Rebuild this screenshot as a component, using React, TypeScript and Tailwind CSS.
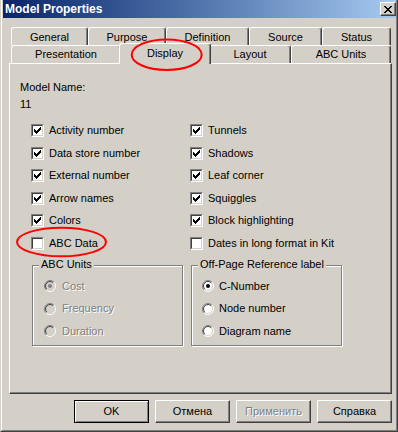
import React from "react";

const Check = ({ checked }: { checked: boolean }) => (
  <span className="block w-[13px] h-[13px] shrink-0 border border-t-[#808080] border-l-[#808080] border-r-white border-b-white">
    <span className="block w-[11px] h-[11px] border border-t-[#404040] border-l-[#404040] border-r-[#d4d0c8] border-b-[#d4d0c8] bg-white">
      {checked && (
        <svg width="9" height="9" viewBox="0 0 9 9" shapeRendering="crispEdges" className="block">
          {[2, 3, 4, 3, 2, 1, 0].map((r, c) => (
            <rect key={c} x={1 + c} y={1 + r} width="1" height="3" fill="#000" />
          ))}
        </svg>
      )}
    </span>
  </span>
);

const arcA = (r: number) => {
  const d = r / Math.SQRT2;
  return `M ${6 - d} ${6 + d} A ${r} ${r} 0 0 1 ${6 + d} ${6 - d}`;
};
const arcB = (r: number) => {
  const d = r / Math.SQRT2;
  return `M ${6 + d} ${6 - d} A ${r} ${r} 0 0 1 ${6 - d} ${6 + d}`;
};

const Radio = ({ checked, disabled }: { checked: boolean; disabled: boolean }) => (
  <svg width="12" height="12" viewBox="0 0 12 12" className="block shrink-0">
    <circle cx="6" cy="6" r="5" fill={disabled ? "#d4d0c8" : "#fff"} />
    <path d={arcA(5.5)} stroke="#808080" strokeWidth="1" fill="none" />
    <path d={arcB(5.5)} stroke="#fff" strokeWidth="1" fill="none" />
    <path d={arcA(4.5)} stroke="#404040" strokeWidth="1" fill="none" />
    <path d={arcB(4.5)} stroke="#d4d0c8" strokeWidth="1" fill="none" />
    {checked && <circle cx="6" cy="6" r="2" fill={disabled ? "#808080" : "#000"} />}
  </svg>
);

const tabBase =
  "h-[18px] flex items-center justify-center border-t border-l border-r border-t-white border-l-white border-r-[#404040] shadow-[inset_-1px_0_#808080] rounded-t-[3px] bg-[#d4d0c8] whitespace-nowrap";

const disabledText = "text-[#808080] [text-shadow:1px_1px_0_#ffffff]";

const leftChecks: [string, boolean][] = [
  ["Activity number", true],
  ["Data store number", true],
  ["External number", true],
  ["Arrow names", true],
  ["Colors", true],
  ["ABC Data", false],
];
const rightChecks: [string, boolean][] = [
  ["Tunnels", true],
  ["Shadows", true],
  ["Leaf corner", true],
  ["Squiggles", true],
  ["Block highlighting", true],
  ["Dates in long format in Kit", false],
];
const rowH = ["h-[23px]", "h-[22px]", "h-[23px]", "h-[22px]", "h-[23px]", "h-[22px]"];

const xPix = [
  [0, 1, 6, 7],
  [1, 2, 5, 6],
  [2, 3, 4, 5],
  [3, 4],
  [2, 3, 4, 5],
  [1, 2, 5, 6],
  [0, 1, 6, 7],
];

const btn =
  "w-[75px] h-[23px] flex items-center justify-center bg-[#d4d0c8] border border-t-white border-l-white border-r-[#404040] border-b-[#404040] shadow-[inset_-1px_-1px_#808080]";

export default function App() {
  return (
    <div className="relative w-[398px] h-[432px] overflow-hidden bg-[#d4d0c8] font-['Liberation_Sans',Arial,sans-serif] text-[11px] leading-[13px] text-black">
      <div className="h-full border-l border-r border-b border-l-[#d4d0c8] border-r-[#404040] border-b-[#404040]">
        <div className="h-full flex flex-col border-l border-r border-b border-l-white border-r-[#808080] border-b-[#808080] pl-[1px]">
          {/* Title bar */}
          <div className="h-[18px] shrink-0 flex items-center justify-between bg-linear-to-r from-[#0a246a] to-[#a6caf0] pl-[2px]">
            <span className="text-white font-bold text-[12px] leading-[14px]">Model Properties</span>
            <div className="w-[16px] h-[14px] flex items-center justify-center bg-[#d4d0c8] border border-t-white border-l-white border-r-[#404040] border-b-[#404040] shadow-[inset_-1px_-1px_#808080]">
              <svg width="8" height="7" viewBox="0 0 8 7" shapeRendering="crispEdges" className="block">
                {xPix.map((row, y) =>
                  row.map((x) => <rect key={`${x}-${y}`} x={x} y={y} width="1" height="1" fill="#000" />)
                )}
              </svg>
            </div>
          </div>

          {/* Tab control */}
          <div className="ml-[6px] mt-[9px] w-[383px]">
            <div className="ml-[2px] flex">
              <div className={`${tabBase} w-[77px] pt-[1px]`}>General</div>
              <div className={`${tabBase} w-[78px] pt-[1px]`}>Purpose</div>
              <div className={`${tabBase} w-[83px] pt-[1px]`}>Definition</div>
              <div className={`${tabBase} w-[73px] pt-[1px]`}>Source</div>
              <div className={`${tabBase} w-[69px] pt-[1px]`}>Status</div>
            </div>
            <div className="ml-[2px] flex items-start h-[18px]">
              <div className={`${tabBase} w-[110px]`}>Presentation</div>
              <div className="relative z-10 -ml-[2px] -mr-[2px] -mt-[2px] w-[92px] h-[21px] flex items-center justify-center border-t border-l border-r border-t-white border-l-white border-r-[#404040] shadow-[inset_-1px_0_#808080] rounded-t-[3px] bg-[#d4d0c8] pb-[1px]">
                Display
              </div>
              <div className={`${tabBase} w-[82px]`}>Layout</div>
              <div className={`${tabBase} w-[100px]`}>ABC Units</div>
            </div>

            {/* Panel */}
            <div className="w-[383px] h-[331px] border border-t-white border-l-white border-r-[#404040] border-b-[#404040] shadow-[inset_-1px_-1px_#808080] pl-[10px] pt-[17px]">
              <div>Model Name:</div>
              <div className="mt-[4px]">11</div>
              <div className="ml-[11px] mt-[8px] grid grid-cols-[159px_1fr]">
                {leftChecks.map(([l, c], i) => (
                  <React.Fragment key={i}>
                    <div className={`${rowH[i]} flex items-start gap-[5px] pt-[5px]`}>
                      <Check checked={c} />
                      <span className="whitespace-nowrap">{l}</span>
                    </div>
                    <div className={`${rowH[i]} flex items-start gap-[5px] pt-[5px]`}>
                      <Check checked={rightChecks[i][1]} />
                      <span className="whitespace-nowrap">{rightChecks[i][0]}</span>
                    </div>
                  </React.Fragment>
                ))}
              </div>

              <div className="ml-[12px] mt-[11px] flex gap-[8px]">
                <div className="relative w-[151px] h-[81px] border border-[#808080] shadow-[inset_1px_1px_#ffffff,1px_1px_#ffffff] pt-[9px] pl-[11px]">
                  <span className="absolute -top-[8px] left-[6px] px-[2px] bg-[#d4d0c8] whitespace-nowrap">ABC Units</span>
                  <div className="h-[22px] flex items-center gap-[6px]">
                    <Radio checked disabled />
                    <span className={disabledText}>Cost</span>
                  </div>
                  <div className="h-[23px] flex items-center gap-[6px]">
                    <Radio checked={false} disabled />
                    <span className={disabledText}>Frequency</span>
                  </div>
                  <div className="h-[22px] flex items-center gap-[6px]">
                    <Radio checked={false} disabled />
                    <span className={disabledText}>Duration</span>
                  </div>
                </div>
                <div className="relative w-[151px] h-[81px] border border-[#808080] shadow-[inset_1px_1px_#ffffff,1px_1px_#ffffff] pt-[9px] pl-[10px]">
                  <span className="absolute -top-[8px] left-[6px] px-[2px] bg-[#d4d0c8] whitespace-nowrap">Off-Page Reference label</span>
                  <div className="h-[22px] flex items-center gap-[5px]">
                    <Radio checked disabled={false} />
                    <span>C-Number</span>
                  </div>
                  <div className="h-[23px] flex items-center gap-[5px]">
                    <Radio checked={false} disabled={false} />
                    <span>Node number</span>
                  </div>
                  <div className="h-[22px] flex items-center gap-[5px]">
                    <Radio checked={false} disabled={false} />
                    <span>Diagram name</span>
                  </div>
                </div>
              </div>
            </div>
          </div>

          {/* Buttons */}
          <div className="ml-[71px] mt-[6px] flex gap-[6px]">
            <div className="w-[75px] h-[23px] flex items-center justify-center bg-[#d4d0c8] border border-black shadow-[inset_1px_1px_#ffffff,inset_-1px_-1px_#808080]">
              OK
            </div>
            <div className={btn}>Отмена</div>
            <div className={btn}>
              <span className={disabledText}>Применить</span>
            </div>
            <div className={btn}>Справка</div>
          </div>
        </div>
      </div>

      {/* red annotation ellipses */}
      <svg className="absolute left-0 top-0 z-20 pointer-events-none" width="398" height="432" viewBox="0 0 398 432">
        <ellipse cx="166.7" cy="54.7" rx="35" ry="15.3" fill="none" stroke="#ff0000" strokeWidth="2" />
        <ellipse cx="61.5" cy="242" rx="44.5" ry="14.3" fill="none" stroke="#ff0000" strokeWidth="2" />
      </svg>
    </div>
  );
}
